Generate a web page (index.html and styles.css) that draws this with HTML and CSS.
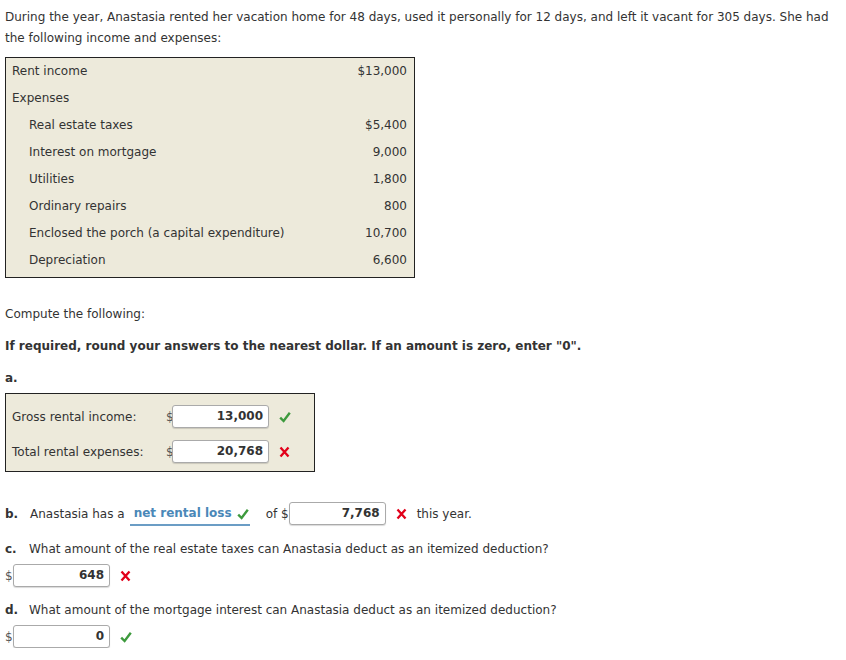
FILE: index.html
```html
<!DOCTYPE html>
<html>
<head>
<meta charset="utf-8">
<link rel="stylesheet" href="styles.css">
</head>
<body>
<div class="page">
  <p class="intro">During the year, Anastasia rented her vacation home for 48 days, used it personally for 12 days, and left it vacant for 305 days. She had the following income and expenses:</p>

  <div class="facts">
    <div class="row"><span>Rent income</span><span>$13,000</span></div>
    <div class="row"><span>Expenses</span><span></span></div>
    <div class="row sub"><span>Real estate taxes</span><span>$5,400</span></div>
    <div class="row sub"><span>Interest on mortgage</span><span>9,000</span></div>
    <div class="row sub"><span>Utilities</span><span>1,800</span></div>
    <div class="row sub"><span>Ordinary repairs</span><span>800</span></div>
    <div class="row sub"><span>Enclosed the porch (a capital expenditure)</span><span>10,700</span></div>
    <div class="row sub"><span>Depreciation</span><span>6,600</span></div>
  </div>

  <p class="compute">Compute the following:</p>
  <p class="instr">If required, round your answers to the nearest dollar. If an amount is zero, enter "0".</p>

  <p class="label-a">a.</p>
  <div class="answers">
    <div class="arow">
      <span class="alabel">Gross rental income:</span>
      <span class="dollar">$</span><span class="inp">13,000</span>
      <svg class="mark ok" width="12" height="12" viewBox="0 0 12 12"><path d="M1.2 6.6 L4.6 10 L10.8 1.8" fill="none" stroke="#3d9a3d" stroke-width="2.4"/></svg>
    </div>
    <div class="arow">
      <span class="alabel">Total rental expenses:</span>
      <span class="dollar">$</span><span class="inp">20,768</span>
      <svg class="mark bad" width="11" height="12" viewBox="0 0 11 12"><path d="M1.5 1.5 L9.5 10.5 M9.5 1.5 L1.5 10.5" fill="none" stroke="#e2001a" stroke-width="2.3"/></svg>
    </div>
  </div>

  <div class="qb">
    <b class="qn">b.</b>
    <span>Anastasia has a</span>
    <span class="select">net rental loss <svg class="mark-in" width="12" height="12" viewBox="0 0 12 12"><path d="M1.2 6.6 L4.6 10 L10.8 1.8" fill="none" stroke="#3d9a3d" stroke-width="2.4"/></svg></span>
    <span class="of">of $</span><span class="inp">7,768</span>
    <svg class="mark bad" width="11" height="12" viewBox="0 0 11 12"><path d="M1.5 1.5 L9.5 10.5 M9.5 1.5 L1.5 10.5" fill="none" stroke="#e2001a" stroke-width="2.3"/></svg>
    <span class="tail">this year.</span>
  </div>

  <div class="q"><b class="qn">c.</b>What amount of the real estate taxes can Anastasia deduct as an itemized deduction?</div>
  <div class="ans"><span class="dollar">$</span><span class="inp">648</span><svg class="mark bad" width="11" height="12" viewBox="0 0 11 12"><path d="M1.5 1.5 L9.5 10.5 M9.5 1.5 L1.5 10.5" fill="none" stroke="#e2001a" stroke-width="2.3"/></svg></div>

  <div class="q qd"><b class="qn">d.</b>What amount of the mortgage interest can Anastasia deduct as an itemized deduction?</div>
  <div class="ans"><span class="dollar">$</span><span class="inp">0</span><svg class="mark ok" width="12" height="12" viewBox="0 0 12 12"><path d="M1.2 6.6 L4.6 10 L10.8 1.8" fill="none" stroke="#3d9a3d" stroke-width="2.4"/></svg></div>
</div>
</body>
</html>
```

FILE: styles.css
```css
html, body {
  margin: 0;
  padding: 0;
  background: #fff;
}
.page {
  font-family: "DejaVu Sans", Verdana, sans-serif;
  font-size: 12px;
  color: #333;
  padding: 7px 0 0 5px;
  width: 835px;
}
p { margin: 0; }
.intro {
  line-height: 21px;
}
.facts {
  margin-top: 8px;
  width: 408px;
  border: 1px solid #222;
  background: #edeadb;
  padding: 0 0 3px 0;
}
.row {
  display: flex;
  justify-content: space-between;
  height: 27px;
  line-height: 27px;
  padding: 0 7px 0 6px;
}
.row.sub {
  padding-left: 23px;
}
.compute {
  margin-top: 26px;
  line-height: 21px;
}
.instr {
  margin-top: 11px;
  line-height: 21px;
  font-weight: bold;
}
.label-a {
  margin-top: 11px;
  line-height: 21px;
  font-weight: bold;
}
.answers {
  margin-top: 4px;
  width: 308px;
  border: 1px solid #222;
  background: #edeadb;
  padding: 11px 0 8px 0;
  display: flex;
  flex-direction: column;
  gap: 12px;
}
.arow {
  display: flex;
  align-items: center;
  height: 23px;
  padding-left: 6px;
}
.alabel {
  width: 154px;
}
.dollar {
  width: 6px;
  color: #555;
  font-size: 12px;
}
.inp {
  display: inline-block;
  box-sizing: border-box;
  width: 97px;
  height: 23px;
  line-height: 21px;
  border: 1px solid #aaa;
  border-radius: 3px;
  background: #fff;
  text-align: right;
  padding-right: 5px;
  font-weight: bold;
  color: #333;
  box-shadow: 0 1px 1px rgba(0,0,0,0.15);
}
.mark {
  margin-left: 10px;
  flex: none;
}
.qn {
  font-weight: bold;
  display: inline-block;
  width: 25px;
}
.qb {
  margin-top: 30px;
  display: flex;
  align-items: center;
  height: 23px;
}
.select {
  display: inline-flex;
  align-items: center;
  box-sizing: border-box;
  width: 120px;
  color: #4a88b8;
  font-weight: bold;
  margin-left: 5px;
  padding: 0 0 1px 4px;
  border-bottom: 2px solid #6b9dc5;
  line-height: 19px;
  margin-top: 3px;
}
.mark-in {
  margin-left: 5px;
}
.of {
  margin-left: 16px;
}
.tail {
  margin-left: 10px;
}
.q {
  margin-top: 14px;
  line-height: 21px;
}
.q .qn {
  width: 24px;
}
.qd {
  margin-top: 13px;
}
.ans {
  display: flex;
  align-items: center;
  height: 23px;
  margin-top: 4px;
}
.ans .dollar {
  width: 8px;
}
```
